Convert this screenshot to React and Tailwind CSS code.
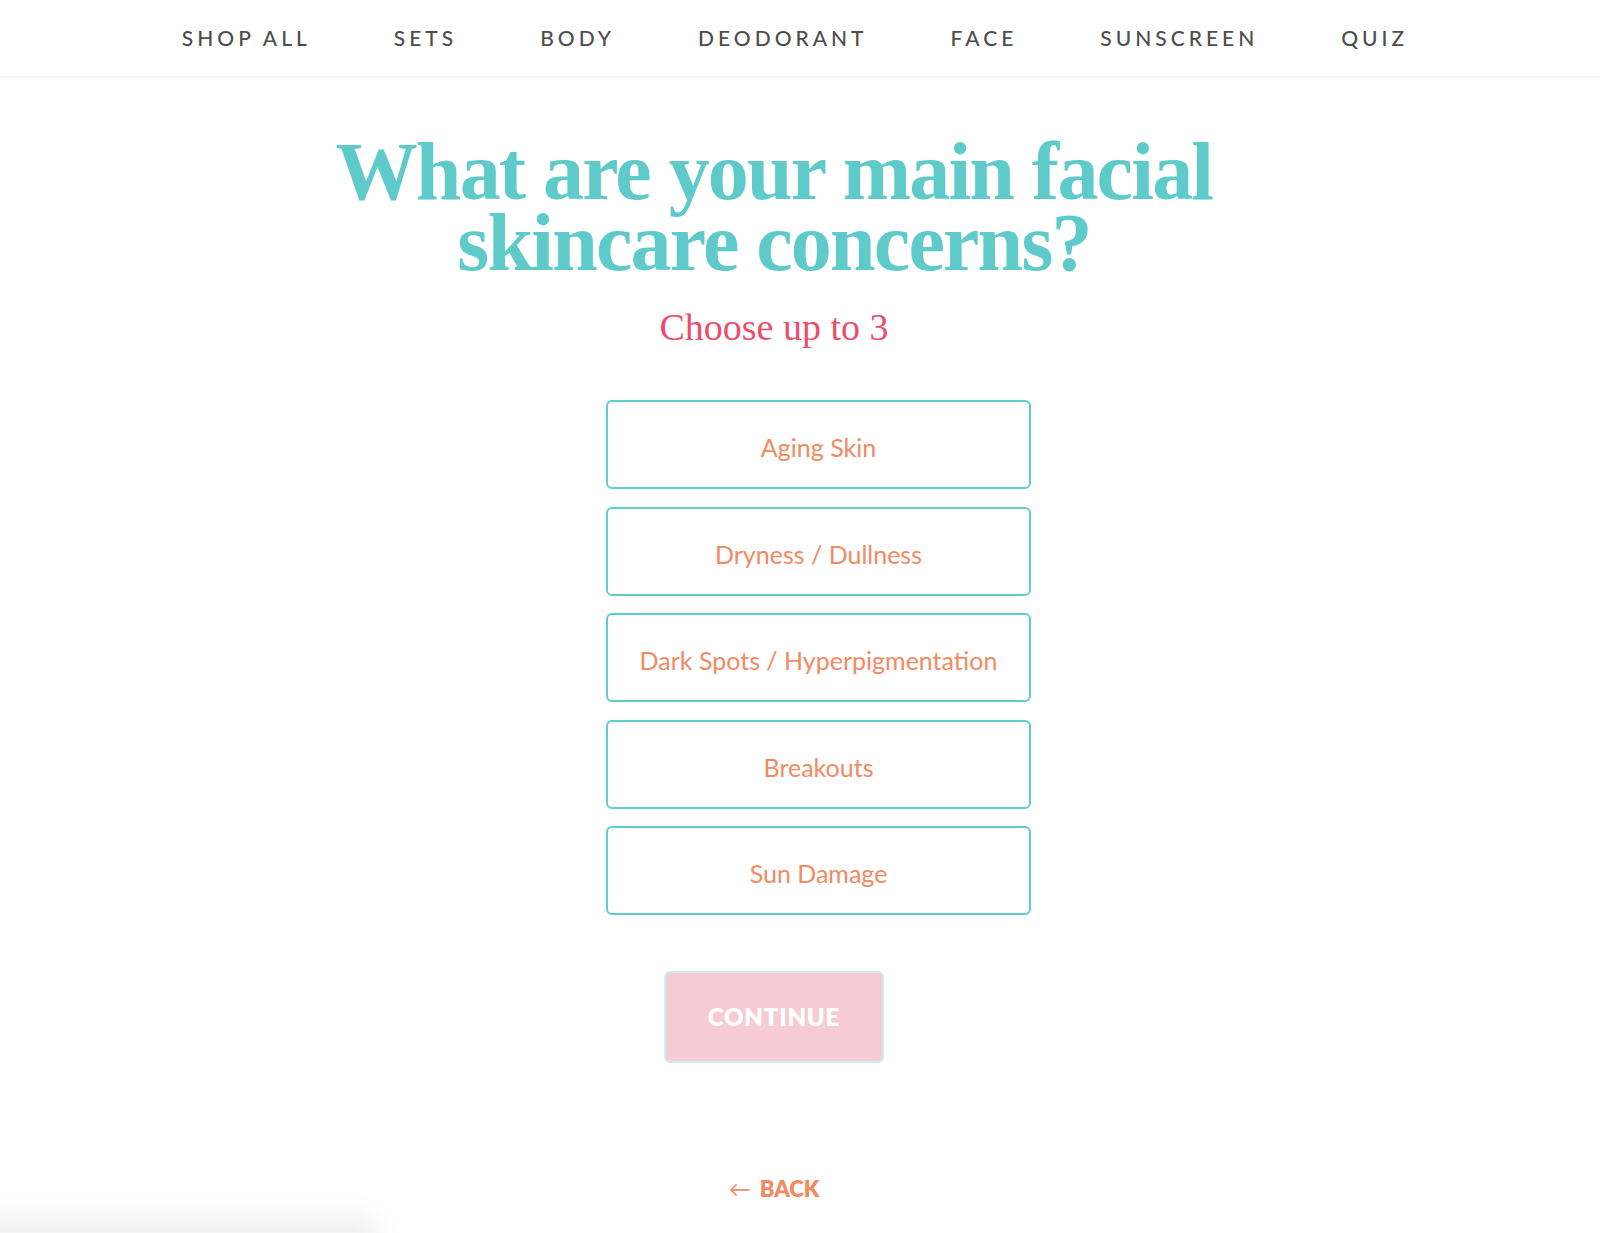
import React from "react";

const navItems = ["SHOP ALL", "SETS", "BODY", "DEODORANT", "FACE", "SUNSCREEN", "QUIZ"];

const concerns = [
  "Aging Skin",
  "Dryness / Dullness",
  "Dark Spots / Hyperpigmentation",
  "Breakouts",
  "Sun Damage",
];

const App = () => {
  return (
    <div className="relative min-h-[1233px] bg-white overflow-hidden font-['Lato',sans-serif]">
      {/* top nav */}
      <header className="h-[78px] border-b-2 border-[#f4f4f4] flex items-center justify-center">
        <nav className="flex items-center gap-[83px] mr-[10px] -mt-[2px]">
          {navItems.map((item) => (
            <a
              key={item}
              href="#"
              className="text-[21px] tracking-[4px] text-[#4d4d4d] font-medium leading-none"
            >
              {item}
            </a>
          ))}
        </nav>
      </header>

      <main className="flex flex-col items-center pr-[52px]">
        <h1 className="mt-[58px] w-[960px] text-center font-['Liberation_Serif',serif] font-bold text-[82px] leading-[71px] tracking-[-1.8px] text-[#5ecbca]">
          What are your main facial skincare concerns?
        </h1>

        <p className="mt-[30px] font-['Liberation_Serif',serif] text-[38px] leading-none text-[#ec4d6c]">
          Choose up to 3
        </p>

        <div className="mt-[54px] ml-[89px] w-[425px] flex flex-col gap-[17.5px]">
          {concerns.map((c) => (
            <button
              key={c}
              className="h-[89px] w-full pt-[7px] rounded-[6px] border-2 border-[#5ccfcd] bg-white text-[25px] text-[#f28a62]"
            >
              {c}
            </button>
          ))}
        </div>

        <button className="mt-[56px] h-[92px] w-[220px] rounded-[6px] border-2 border-[#cdeeee] bg-[#f7cbd3] text-white font-extrabold text-[24px] tracking-[0.8px]">
          CONTINUE
        </button>

        <a
          href="#"
          className="mt-[115px] flex items-center gap-[9px] text-[#f28a62] font-extrabold text-[22px] leading-none"
        >
          <span className="font-normal text-[22px]">←</span>
          <span>BACK</span>
        </a>
      </main>

      {/* soft shadow from a fixed widget at the bottom left */}
      <div className="absolute left-[-40px] bottom-[-30px] h-[50px] w-[420px] rounded-full bg-black/5 blur-md"></div>
    </div>
  );
};

export default App;
